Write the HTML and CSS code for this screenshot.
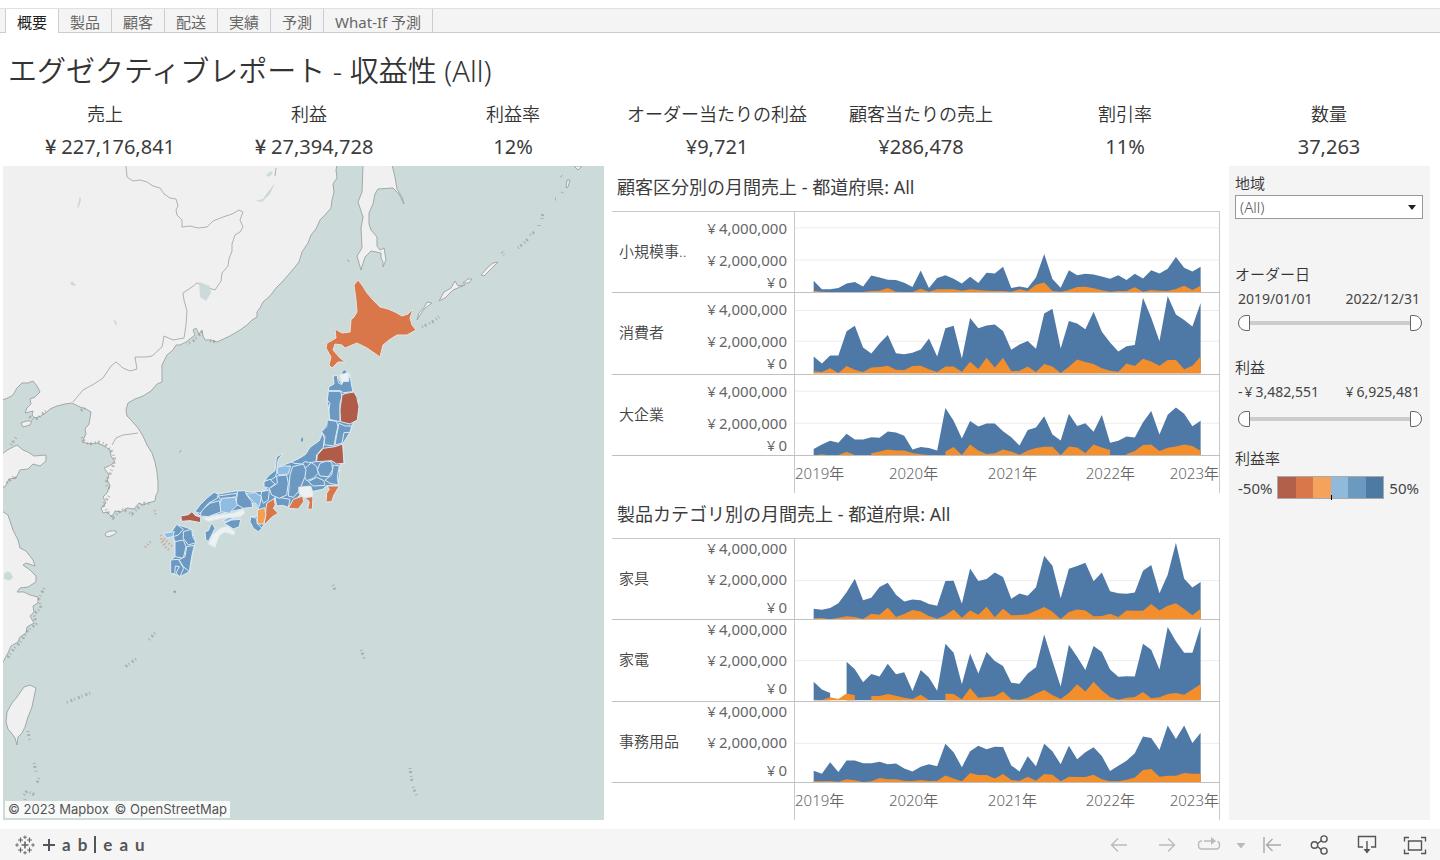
FILE: index.html
```html
<!DOCTYPE html>
<html lang="ja">
<head>
<meta charset="utf-8">
<meta name="viewport" content="width=device-width, initial-scale=1">
<title>エグゼクティブレポート</title>
<link rel="stylesheet" href="styles.css">
</head>
<body>
<div class="page">
  <nav class="tabs" aria-label="シート">
    <button class="tab tab-active" type="button">概要</button>
    <button class="tab" type="button">製品</button>
    <button class="tab" type="button">顧客</button>
    <button class="tab" type="button">配送</button>
    <button class="tab" type="button">実績</button>
    <button class="tab" type="button">予測</button>
    <button class="tab" type="button">What-If 予測</button>
  </nav>

  <header class="title"><h1>エグゼクティブレポート - 収益性 (All)</h1></header>

  <dl class="kpis">
    <div class="kpi"><dt>売上</dt><dd><b>¥</b>227,176,841</dd></div>
    <div class="kpi"><dt>利益</dt><dd><b>¥</b>27,394,728</dd></div>
    <div class="kpi"><dt>利益率</dt><dd>12%</dd></div>
    <div class="kpi"><dt>オーダー当たりの利益</dt><dd>¥9,721</dd></div>
    <div class="kpi"><dt>顧客当たりの売上</dt><dd>¥286,478</dd></div>
    <div class="kpi"><dt>割引率</dt><dd>11%</dd></div>
    <div class="kpi"><dt>数量</dt><dd>37,263</dd></div>
  </dl>

  <main class="board">
    <section class="map" aria-label="地図">
      <svg class="map-art" viewBox="3 166 601 654" preserveAspectRatio="xMinYMin slice" aria-hidden="true">
        <g class="land">
          <path d="M2 165H337L336 170 337 178 333 184 334 192 332 200 331 208 325 215 320 220 316 229 311 235 308 243 302 252 299 262 295 267 289 274 283 281 276 288 270 296 263 302 260 308 257 312 257 317 252 320 247 325 240 330 230 336 217 342 211 340 205 340 203 336 202 330 199 334 196 328 193 330 195 335 190 339 186 342 180 345 176 345 173 350 167 355 162 365 162 382 157 384 151 391 143 396 135 399 128 403 126 410 127 416 131 420 138 428 143 436 147 445 152 453 155 462 157 472 158 482 158 492 156 495 155 501 148 503 143 505 139 503 134 509 127 508 121 512 115 511 112 517 107 512 103 513 101 508 106 503 103 497 107 493 110 485 107 480 109 475 104 468 109 466 115 462 111 456 110 450 104 446 97 443 90 444 82 442 86 434 85 429 89 424 91 412 86 409 80 407 72 403 65 404 57 406 50 409 47 412 41 416 35 418 32 415 33 411 25 413 27 408 31 404 30 399 35 397 40 392 37 386 33 381 28 383 22 383 17 388 13 395 8 398 2 400Z"/>
          <path d="M2 454L9 449 17 445 23 450 28 452 34 456 46 455 46 461 40 466 33 464 28 469 20 470 16 478 9 479 5 487 2 487Z"/>
          <path d="M2 511L8 515 13 530 18 540 20 548 26 551 33 560 35 566 26 563 23 565 30 570 36 576 36 582 28 587 20 588 17 592 24 592 30 595 38 597 38 603 33 606 34 612 30 616 34 623 27 627 26 633 20 637 18 642 11 646 8 653 2 664Z"/>
          <path d="M30 685L36 688 34 697 32 707 28 717 25 727 22 733 18 737 17 745 15 738 13 735 8 729 6 722 7 712 12 703 17 697 24 687Z"/>
          <path d="M105 534Q108 530 116 531Q118 533 111 536Q106 538 105 534ZM21 423Q26 420 32 421L30 425 23 427Z"/>
          <path d="M363 165L362 192 358 202 363 217 361 228 362 248 357 256 361 270 365 257 371 251 376 252 381 253 381 258 383 262 383 267 386 260 384 248 380 250 377 246 377 237 371 230 369 224 369 213 373 204 375 194 378 189 393 188 399 194 404 204 402 197 397 189 395 177 392 165Z"/>
          <path d="M417 320L419 313 425 306 427 302 432 303 424 309ZM439 301L444 292 451 288 455 281 458 286 465 285 453 290 445 298ZM463 283L468 279 472 279 469 283ZM481 275L488 267 493 263 498 262 492 268 484 276ZM574 166L578 170 582 166ZM566 188L567 180 570 180 568 187Z"/>
        </g>
        <g class="border">
          <path d="M126 166L127 177 133 181 140 180 147 182 153 186 160 188 164 194 170 198 176 199 178 206 176 210 177 215 182 220 182 227 190 226 198 228 207 227 213 221 223 217 232 214 239 210 243 212 240 220 243 227 240 232 235 235 232 244 232 251 229 259 228 266 222 273 221 281 215 290 203 286 197 283 192 287 183 293 184 300 187 311 186 325 184 338 173 340M173 340L164 336 162 347 152 356 146 357 135 357 137 369 130 371 123 368 116 362 111 366 103 378 94 384 83 390 73 402M138 433L131 434 123 435 116 438 112 445M276 168L275 176"/>
        </g>
        <path class="water" d="M199 282L210 286 211 293 206 301 200 297ZM77 208L80 196 81 200 79 207ZM70 284L72 281 76 285 74 286ZM113 319L117 322 116 326ZM255 201L263 199 267 193 275 183 270 194 262 202ZM266 175L271 171 273 173 269 177ZM4 574Q9 568 13 577 11 582 4 579Z"/>
        <g class="islets">
          <path d="M82 437Q86 446 94 443T109 448T114 463T108 478T110 488"/>
          <path d="M109 496L103 505 107 511 113 518 122 509 132 514 143 503 151 504"/>
          <path d="M44 588L39 599 41 608 34 614 36 624 28 630 22 640 13 650 6 660"/>
          <path d="M46 411L35 420 27 415M202 332L193 341 187 344M210 341L217 342M85 408L80 411M7 483L14 476 16 480M11 445L17 436"/>
          <path d="M518 248L524 243 528 239M530 235L536 231M539 226L539 225M542 219L543 212M555 199L558 199M562 193L563 191M561 176L562 177M502 252L504 255M422 327L434 321 439 317M348 261L349 260M180 451L181 452"/>
          <path d="M28 731L30 742M34 763L36 772M24 795L27 791 35 795M25 799L23 807M39 778L37 783M155 633L148 641M136 659L125 667M90 693L65 703M410 768L412 783M413 787L417 796M361 650L365 660M333 585L335 590"/>
        </g>
        <path class="pref orange" d="M358 280L362 285 367 293 373 300 380 307 388 309 395 312 402 316 408 314 413 309 410 318 412 325 416 330 407 335 397 335 389 340 383 345 380 357 367 348 357 343 345 348 342 345 335 344 333 350 340 358 345 362 338 362 332 368 329 365 331 357 326 348 327 343 331 341 336 338 335 329 342 333 350 332 351 320 354 317 357 312 356 300 354 285Z"/>
        <g class="prefs" transform="translate(140 360) scale(.3333)">
          <g class="blue">
            <path d="M565 92L561 120 567 150 569 178 545 215 551 240 520 258 497 283 455 306 412 322 408 332 375 360 372 380 386 392 340 396 293 392 235 402 222 397 200 415 165 455 185 472 240 462 310 446 340 428 356 444 350 470 332 470 332 490 355 515 376 490 395 470 385 440 406 412 445 442 480 405 515 395 548 388 560 377 595 375 600 315 612 310 608 252 630 217 635 198 655 160 656 115 640 95 630 65 605 72 590 46 580 48 582 72 567 80Z"/>
            <path d="M95 515L110 493 155 508 168 548 163 556 148 635 120 650 104 642 92 640 92 600 105 590 105 545Z"/>
            <path d="M565 92L567 80 582 72 580 48 592 46 595 68 605 74 610 62 625 65 630 40 634 72 639 95 610 98 600 92ZM605 38L612 28 621 34 618 44 607 43Z"/>
            <path d="M565 94H602L606 110 600 130 600 185 585 182 569 178 567 150 570 130 562 120Z"/>
            <path d="M562 180L590 184 594 200 588 225 582 258 552 254 555 230 545 215 560 200Z"/>
            <path d="M597 190L615 198 635 198 630 217 612 218 606 250 585 255 590 225Z"/>
            <path d="M547 220L553 235 550 262 530 285 528 305 510 308 495 305 485 312 462 310 455 306 478 295 497 283 510 262 538 242Z"/>
            <path d="M540 310L560 303 575 306 578 330 565 350 540 348 532 330Z"/>
            <path d="M580 315L598 318 592 350 595 375 570 370 555 360 575 345Z"/>
            <path d="M495 325L515 308 530 320 535 340 520 355 500 362 490 345Z"/>
            <path d="M505 365L530 352 552 362 555 376 520 378Z"/>
            <path d="M458 320L490 312 498 330 495 350 485 375 475 395 460 412 445 408 448 370 450 345Z"/>
            <path d="M405 410L450 418 445 442 428 436 410 438Z"/>
            <path d="M388 385L412 370 410 348 440 345 445 370 440 405 418 415 395 405Z"/>
            <path d="M408 302L410 290 430 280 417 295 412 308 410 340 405 352 388 362 375 360 388 345 405 332Z"/>
            <path d="M372 365L390 358 405 372 388 385 372 380Z"/>
            <path d="M365 395L388 390 385 420 370 430 362 410Z"/>
            <path d="M332 470L350 475 352 490 366 505 355 515 340 505 330 485Z"/>
            <path d="M293 393L315 392 320 405 335 425 338 442 310 445 288 432Z"/>
            <path d="M235 408L290 400 290 410 240 418Z"/>
            <path d="M185 450L210 430 238 422 245 455 205 470 180 468Z"/>
            <path d="M165 455L180 435 200 415 222 397 235 402 232 415 205 430 180 460Z"/>
            <path d="M195 515L205 512 215 488 225 505 215 525 205 545 197 538Z"/>
            <path d="M252 490L275 480 302 478 298 500 280 507 265 497Z"/>
            <path d="M95 515L110 493 130 508 115 525 100 530Z"/>
            <path d="M130 515L155 508 158 530 168 548 145 555 130 535Z"/>
            <path d="M105 545L130 540 138 560 130 595 105 590Z"/>
            <path d="M140 560L163 556 155 590 148 635 130 620 117 600 135 590Z"/>
            <path d="M92 600L115 598 131 625 120 650 108 640 118 620 106 618 104 642 92 640Z"/>
          </g>
          <path class="blue bare" d="M483 236L489 232 489 243 484 246ZM101 692h6v6h-6Z"/>
          <g class="red">
            <path d="M606 105L618 100 642 96 650 110 657 140 652 180 630 192 602 185 600 150Z"/>
            <path d="M532 285L550 265 585 260 608 252 612 310 590 312 575 302 548 304 530 305Z"/>
            <path d="M122 468L145 464 156 455 165 466 182 472 182 488 150 482 125 484Z"/>
          </g>
          <g class="sky">
            <path d="M412 322L430 318 452 318 445 342 420 345 412 340Z"/>
            <path d="M245 415L285 412 292 435 268 460 242 455 240 430Z"/>
            <path d="M318 400L345 398 365 410 358 440 340 425 328 412Z"/>
            <path d="M70 520L103 515 98 530 80 534Z"/>
            <path d="M245 483L270 470 282 473 262 484Z"/>
          </g>
          <g class="pale">
            <path d="M600 45L625 38 626 62 605 66Z"/>
            <path d="M476 382L512 378 518 395 518 410 492 412 478 402Z"/>
            <path d="M205 552L218 525 240 506 262 498 284 515 282 525 255 516 238 526 225 562Z"/>
            <path d="M190 475L240 465 280 460 310 448 314 460 300 470 250 474 205 484Z"/>
          </g>
          <g class="orange">
            <path d="M562 378L598 378 582 405 575 425 558 426 560 400 568 388Z"/>
            <path d="M445 445L460 418 488 408 491 425 475 447Z"/>
            <path d="M495 413L519 410 517 448 503 447 508 425Z"/>
            <path d="M380 430L402 416 406 435 400 445 414 460 395 472 372 496 376 465Z"/>
          </g>
          <path class="amber" d="M352 450L374 443 378 465 371 492 352 492Z"/>
          <path class="specks" d="M44 450L48 470M62 525L66 550 80 565 90 572M72 535L88 552 98 560M15 562L25 552 34 544M68 542L78 556"/>
        </g>
      </svg>
      <p class="credit"><a href="#mapbox">© 2023 Mapbox</a> <a href="#osm">© OpenStreetMap</a></p>
    </section>

    <div class="charts">
      <section class="chart">
        <h2>顧客区分別の月間売上 - 都道府県: All</h2>
        <div class="rows rows-segment">
          <div class="row"><span class="name">小規模事..</span><div class="scale"><span>¥4,000,000</span><span>¥2,000,000</span><span>¥0</span></div><svg class="plot" data-series="small"></svg></div>
          <div class="row"><span class="name">消費者</span><div class="scale"><span>¥4,000,000</span><span>¥2,000,000</span><span>¥0</span></div><svg class="plot" data-series="consumer"></svg></div>
          <div class="row"><span class="name">大企業</span><div class="scale"><span>¥4,000,000</span><span>¥2,000,000</span><span>¥0</span></div><svg class="plot" data-series="corporate"></svg></div>
        </div>
        <div class="years"><span>2019年</span><span>2020年</span><span>2021年</span><span>2022年</span><span>2023年</span></div>
      </section>
      <section class="chart">
        <h2>製品カテゴリ別の月間売上 - 都道府県: All</h2>
        <div class="rows rows-category">
          <div class="row"><span class="name">家具</span><div class="scale"><span>¥4,000,000</span><span>¥2,000,000</span><span>¥0</span></div><svg class="plot" data-series="furniture"></svg></div>
          <div class="row"><span class="name">家電</span><div class="scale"><span>¥4,000,000</span><span>¥2,000,000</span><span>¥0</span></div><svg class="plot" data-series="technology"></svg></div>
          <div class="row"><span class="name">事務用品</span><div class="scale"><span>¥4,000,000</span><span>¥2,000,000</span><span>¥0</span></div><svg class="plot" data-series="office"></svg></div>
        </div>
        <div class="years"><span>2019年</span><span>2020年</span><span>2021年</span><span>2022年</span><span>2023年</span></div>
      </section>
    </div>

    <aside class="filters">
      <div class="filter filter-region">
        <label for="region">地域</label>
        <div class="select"><select id="region"><option>(All)</option></select></div>
      </div>
      <fieldset class="filter filter-date">
        <legend>オーダー日</legend>
        <div class="ends"><label for="date-from">2019/01/01</label><label for="date-to">2022/12/31</label></div>
        <div class="range">
          <input class="from" id="date-from" type="range" min="0" max="100" value="0">
          <input class="to" id="date-to" type="range" min="0" max="100" value="100">
        </div>
      </fieldset>
      <fieldset class="filter filter-profit">
        <legend>利益</legend>
        <div class="ends"><label for="profit-from">-<span class="yen">¥</span>3,482,551</label><label for="profit-to"><span class="yen">¥</span>6,925,481</label></div>
        <div class="range">
          <input class="from" id="profit-from" type="range" min="0" max="100" value="0">
          <input class="to" id="profit-to" type="range" min="0" max="100" value="100">
        </div>
      </fieldset>
      <div class="filter filter-ratio">
        <h3>利益率</h3>
        <div class="ramp">
          <span>-50%</span>
          <div class="ramp-bar"><i class="c1"></i><i class="c2"></i><i class="c3"></i><i class="c4"></i><i class="c5"></i><i class="c6"></i></div>
          <span>50%</span>
        </div>
      </div>
    </aside>
  </main>

  <footer class="toolbar">
    <a class="brand" href="#tableau" aria-label="tableau">
      <svg class="brand-mark" viewBox="0 0 20 20" aria-hidden="true">
        <path d="M10 6.500v7M6.500 10h7" stroke-width="1.600"/>
        <path d="M5.500 2.500v5M3 5h5M14.500 2.500v5M12 5h5M5.500 12.500v5M3 15h5M14.500 12.500v5M12 15h5" stroke-width="1.200"/>
        <path d="M10 .5v3.500M8.200 2.200h3.600M10 16v3.500M8.200 17.800h3.600M2 8.200v3.600M.3 10h3.500M18 8.200v3.600M16.200 10h3.500" stroke-width="1"/>
      </svg>
      <span class="word">
        <svg class="word-plus" viewBox="0 0 12 12" aria-hidden="true"><path d="M6 0v12M0 6h12"/></svg>
        <span>a</span><span>b</span><i class="word-bar"></i><span>e</span><span>a</span><span>u</span>
      </span>
    </a>
    <div class="actions">
      <button class="act dim w-back" type="button" aria-label="元に戻す"><svg viewBox="0 0 24 24"><path d="M20 12H4.500M11 5.500L4.500 12l6.500 6.500"/></svg></button>
      <button class="act dim w-fwd" type="button" aria-label="やり直し"><svg viewBox="0 0 24 24"><path d="M4 12h15.500M13 5.500l6.500 6.500-6.500 6.500"/></svg></button>
      <button class="act dim w-replay" type="button" aria-label="リプレイ"><svg viewBox="0 0 24 24"><path d="M5 8Q1.500 8 1.500 11V12.500Q1.500 16 5 16H19Q22.500 16 22.500 12.500V11Q22.500 9 20.500 8.500M7 8H15" /><path class="fill" d="M14 4l5 4-5 4z"/></svg></button>
      <button class="act dim w-more" type="button" aria-label="その他"><svg viewBox="0 0 24 24"><path class="fill" d="M7.500 10h9L12 15.500z"/></svg></button>
      <button class="act dim2 w-revert" type="button" aria-label="最初に戻す"><svg viewBox="0 0 24 24"><path d="M4 4v16M21 12H6.500M12.500 6l-6 6 6 6"/></svg></button>
      <button class="act" type="button" aria-label="共有"><svg viewBox="0 0 24 24"><path d="M10.500 10.800L14.500 7.500M10.500 13.500l4 3.500" /><circle cx="7.500" cy="12" r="3.200"/><circle cx="17" cy="6" r="3.100"/><circle cx="17" cy="18" r="3.100"/></svg></button>
      <button class="act" type="button" aria-label="ダウンロード"><svg viewBox="0 0 24 24"><path d="M8 14H3.500V3.500h17V14H16M12 8v9"/><path class="fill" d="M8.500 16h7L12 20.500z"/></svg></button>
      <button class="act" type="button" aria-label="全画面表示"><svg viewBox="0 0 24 24"><path d="M5.500 8h13v9h-13zM6 4.500H1.500V8.500M18 4.500h4.500V8.500M6 20.500H1.500V16.500M18 20.500h4.500V16.500"/></svg></button>
    </div>
  </footer>
</div>
<script src="charts.js"></script>
</body>
</html>
```
FILE: styles.css
```css
* { box-sizing: border-box; }
body {
  margin: 0;
  color: #333;
  background: #fff;
  font-family: "Noto Sans", "Noto Sans CJK JP", sans-serif;
  font-size: 15px;
}
h1, h2, h3, p, dl, dd, fieldset { margin: 0; padding: 0; border: 0; font-weight: 400; }
button { font: inherit; color: inherit; background: none; border: 0; padding: 0; }
a { color: inherit; text-decoration: none; }

.page { min-height: 100vh; display: flex; flex-direction: column; padding-top: 8px; }

/* sheet tabs */
.tabs {
  display: flex;
  height: 25px;
  padding-left: 5px;
  background: #f4f4f4;
  border-top: 1px solid #e0e0e0;
  border-bottom: 1px solid #ccc;
}
.tab {
  height: 23px;
  padding: 0 11px;
  line-height: 27px;
  color: #666;
  border-right: 1px solid #ccc;
}
.tab-active { height: 24px; background: #fff; color: #222; border-left: 1px solid #ccc; }

.title { padding: 16px 8px 0; }
.title h1 { font-size: 29px; line-height: 44px; font-weight: 350; white-space: nowrap; }

.kpis {
  display: grid;
  grid-template-columns: repeat(7, minmax(0, 1fr));
  padding: 7px 9px 0 3px;
  text-align: center;
  white-space: nowrap;
}
.kpi dt { font-size: 18px; line-height: 28px; font-weight: 350; }
.kpi dd { font-size: 20px; line-height: 38px; color: #3c3c3c; }
.kpi b {
  padding: 0 5px 0 10px;
  font-weight: 500;
  line-height: 1;
  font-family: "Noto Sans CJK JP", sans-serif;
}

.board {
  flex: 1;
  display: grid;
  grid-template-columns: 601fr 609fr 201fr;
  gap: 8px;
  margin: 0 10px 9px 3px;
}

/* map */
.map { position: relative; min-width: 0; overflow: hidden; background: #ccdbda; }
.map-art { position: absolute; inset: 0; width: 100%; height: 100%; }
.land path { fill: #f0f0f0; stroke: #a3a7a7; stroke-width: 1; }
.border path { fill: none; stroke: #b0b0b0; stroke-width: 1; }
.water { fill: #ccdbda; }
.islets path { fill: none; stroke: #8d9494; stroke-width: 3; stroke-dasharray: 1 2 2 3; opacity: .6; }
.pref { stroke: #e8e3dc; stroke-width: 1; }
.prefs { stroke: #dcebf5; stroke-width: 3; stroke-linejoin: round; }
.prefs .bare { stroke: none; }
.blue { fill: #6c99c1; }
.sky { fill: #8fbce0; }
.red { fill: #b05c48; }
.orange { fill: #d9774a; }
.amber { fill: #f5a04f; }
.pale { fill: #eef1f2; }
.specks { fill: none; stroke: #d39c8b; stroke-width: 7; stroke-dasharray: 4 6; opacity: .8; }
.credit {
  position: absolute;
  left: 2px;
  bottom: 2px;
  padding: 0 3px;
  background: rgba(255, 255, 255, .85);
  color: #555;
  font-family: Inter, sans-serif;
  font-size: 13px;
  line-height: 17px;
  white-space: nowrap;
}
.credit a + a { margin-left: 2px; }

/* charts */
.charts { display: flex; flex-direction: column; min-width: 0; padding-right: 1px; }
.chart { flex: 1; display: flex; flex-direction: column; }
.chart h2 { height: 45px; padding-left: 5px; font-size: 18px; line-height: 42px; color: #3c3c3c; white-space: nowrap; }
.rows { flex: 1; display: grid; grid-auto-rows: 1fr; border-top: 1px solid #c8c8c8; }
.row {
  display: grid;
  grid-template-columns: 75px 107px minmax(0, 1fr);
  border-bottom: 1px solid #c0c0c0;
  color: #666;
}
.name { align-self: center; padding: 0 0 3px 7px; font-weight: 350; color: #444; }
.scale { display: flex; flex-direction: column; padding-right: 7px; text-align: right; line-height: 18px; }
.scale span::first-letter { margin-right: 3px; }
.rows-segment .scale { padding-top: 7px; }
.rows-segment .scale span:nth-child(2) { margin-top: 14px; }
.rows-segment .scale span:nth-child(3) { margin-top: 4px; }
.rows-category .scale span:nth-child(2) { margin-top: 13px; }
.rows-category .scale span:nth-child(3) { margin-top: 10px; }
.plot { width: 100%; height: 0; min-height: 100%; border-left: 1px solid #c8c8c8; border-right: 1px solid #c8c8c8; }
.plot .grid { stroke: #ececec; stroke-width: 3; }
.plot .sales { fill: #4e79a7; }
.plot .profit { fill: #f28e2b; }
.years {
  display: grid;
  grid-template-columns: 94fr 99fr 98fr 84fr 49fr;
  height: 37px;
  margin-left: 182px;
  border-left: 1px solid #c8c8c8;
  border-right: 1px solid #c8c8c8;
  line-height: 35px;
  color: #666;
  font-weight: 350;
  white-space: nowrap;
}
.years span:last-child { text-align: right; }

/* filters */
.filters { background: #f4f4f4; padding: 6px 7px 0 6px; min-width: 0; }
.filter label, .filter legend, .filter h3 { font-size: 15px; line-height: 22px; padding: 0; font-weight: 350; }
.filter-region { height: 91px; }
.filter-region > label { display: block; }
.select { position: relative; margin-top: 1px; }
.select::after {
  content: "";
  position: absolute;
  right: 7px;
  top: 10px;
  border: 4px solid transparent;
  border-top: 5px solid #222;
  border-bottom: 0;
  pointer-events: none;
}
.select select {
  display: block;
  width: 100%;
  height: 24px;
  padding: 0 4px;
  appearance: none;
  border: 1px solid #999;
  border-radius: 0;
  background: #fff;
  color: #555;
  font: 300 15px "Noto Sans", "Noto Sans CJK JP", sans-serif;
}
.filter-date { height: 93px; }
.filter-profit { height: 91px; }
.ends { display: flex; justify-content: space-between; padding: 4px 3px 2px; }
.filter .ends label { font-size: 14px; line-height: 20px; font-weight: 400; color: #444; white-space: nowrap; }
.yen { padding: 0 3px 0 2px; }
.range { display: grid; padding: 3px 1px 0 3px; }
.filter-profit .range { padding-top: 6px; }
.range input {
  grid-area: 1 / 1;
  width: 100%;
  height: 18px;
  margin: 0;
  appearance: none;
  background: none;
  pointer-events: none;
}
.range .from { background: linear-gradient(#ccc, #ccc) center / 100% 4px no-repeat; }
.range input::-webkit-slider-thumb {
  appearance: none;
  width: 12px;
  height: 16px;
  border: 1px solid #666;
  background: #fff;
  pointer-events: auto;
}
.range .from::-webkit-slider-thumb { border-radius: 8px 1px 1px 8px; }
.range .to::-webkit-slider-thumb { border-radius: 1px 8px 8px 1px; }
.ramp { display: flex; align-items: center; gap: 5px; padding: 7px 4px 0 3px; color: #444; }
.ramp-bar { position: relative; flex: 1; display: flex; height: 23px; border: 1px solid #aaa; }
.ramp-bar::after { content: ""; position: absolute; left: 50%; bottom: -2px; width: 1px; height: 5px; background: #000; }
.ramp-bar i { flex: 1; }
.c1 { background: #b3604b; }
.c2 { background: #d9774a; }
.c3 { background: #f5a35c; }
.c4 { background: #8fbadc; }
.c5 { background: #6c99c0; }
.c6 { background: #4c7aa3; }

/* bottom toolbar */
.toolbar {
  display: flex;
  justify-content: space-between;
  align-items: center;
  height: 31px;
  padding: 0 1px 0 15px;
  background: #f5f5f5;
  color: #555;
}
.brand { display: flex; align-items: center; gap: 8px; }
.brand-mark { width: 20px; height: 20px; stroke: #666; fill: none; }
.word { display: flex; align-items: center; gap: 7px; font: 700 17px/22px Lato, sans-serif; }
.word-plus { width: 12px; height: 12px; stroke: #555; stroke-width: 2; }
.word-bar { width: 2px; height: 17px; background: #555; }
.actions { display: flex; }
.act { width: 48px; height: 31px; display: grid; place-items: center; }
.act svg { width: 24px; height: 24px; fill: none; stroke: #555; stroke-width: 1.4; }
.act .fill { fill: #555; stroke: none; }
.dim svg { stroke: #bbb; }
.dim .fill { fill: #bbb; }
.dim2 svg { stroke: #aaa; }
.w-back { width: 52px; }
.w-fwd { width: 44px; }
.w-replay { width: 40px; }
.w-more { width: 20px; }
.w-revert { width: 46px; }
```
FILE: charts.js
```js
// Monthly heights, January 2019 to December 2022; 49 units = 1,000,000 yen in the
// segment charts, 58 units in the category charts. null marks a month without a value.
const SERIES = {
  small: {
    grid: [98, 195],
    sales: [35,9,9,13,27,31,18,51,45,38,37,29,16,66,13,43,52,41,27,47,28,59,57,77,13,18,13,45,116,40,14,67,52,56,54,48,41,52,37,56,42,67,57,71,107,74,63,77],
    profit: [5,2,1,1,1,1,1,4,5,13,2,1,1,11,2,9,9,9,5,9,7,5,4,4,2,9,4,23,30,4,2,7,16,17,12,6,2,4,4,15,2,7,5,4,10,20,7,20]
  },
  consumer: {
    grid: [97, 190],
    sales: [51,30,54,54,127,144,78,60,90,116,61,58,62,72,105,51,136,144,45,167,136,145,148,128,71,87,98,74,181,195,75,158,151,133,186,126,93,66,82,86,229,168,97,234,178,161,142,213],
    profit: [6,4,15,1,22,11,4,18,19,23,11,10,22,23,12,4,21,21,5,35,13,47,18,47,6,8,21,4,28,21,1,20,42,34,28,15,8,5,30,22,44,36,23,40,40,12,23,51]
  },
  corporate: {
    grid: [97, 194],
    sales: [19,33,44,38,65,48,48,55,53,72,69,59,18,25,22,15,143,105,51,104,87,96,96,73,55,30,77,84,118,63,45,126,89,97,71,122,38,44,57,54,100,134,63,123,145,126,88,105],
    profit: [0,3,0,1,11,1,null,6,12,18,15,15,7,3,1,null,12,25,1,33,15,4,6,18,12,2,15,22,26,26,1,27,24,7,33,24,16,null,4,13,31,33,13,23,27,33,28,14]
  },
  furniture: {
    grid: [117],
    sales: [32,29,34,49,82,123,58,65,98,111,74,54,60,58,46,41,116,117,47,154,116,122,142,128,62,78,71,97,192,162,64,153,161,171,115,142,85,79,77,81,147,164,79,135,232,123,96,113],
    profit: [3,4,0,5,9,7,1,17,14,36,7,16,28,24,10,2,12,30,5,27,14,38,6,32,12,13,15,26,37,23,1,22,30,27,9,10,17,7,27,26,26,46,27,41,49,31,12,32]
  },
  technology: {
    grid: [120],
    sales: [56,33,22,null,117,94,55,80,72,111,79,85,28,92,69,29,171,144,49,142,81,146,119,104,53,50,81,100,199,119,42,168,132,92,164,146,93,71,73,72,171,153,93,222,179,144,144,224],
    profit: [2,1,9,4,21,15,null,13,13,19,14,8,4,17,1,null,20,19,3,37,8,10,12,27,3,2,8,21,31,16,4,22,49,27,56,30,10,2,8,10,25,6,9,19,22,17,33,49]
  },
  office: {
    grid: [118],
    sales: [35,26,61,31,66,66,58,58,62,55,57,42,33,47,55,49,117,91,46,94,111,100,108,107,51,33,79,49,117,94,55,111,70,91,106,80,34,50,65,88,139,134,98,172,131,172,119,150],
    profit: [4,3,4,2,9,6,1,3,13,9,9,5,4,7,4,5,21,12,3,28,22,22,12,25,7,5,17,5,25,23,3,17,16,16,23,9,3,3,8,15,37,40,17,20,20,28,26,26]
  }
};

const WIDTH = 1272, HEIGHT = 243, START = 56, STEP = 24.7;

function area(values) {
  let d = "", lastX = null;
  values.forEach((v, i) => {
    if (v === null) {
      if (lastX !== null) d += `V${HEIGHT}Z`;
      lastX = null;
      return;
    }
    const x = (START + i * STEP).toFixed(1);
    d += lastX === null ? `M${x} ${HEIGHT}V${HEIGHT - v}` : `L${x} ${HEIGHT - v}`;
    lastX = x;
  });
  return d + `V${HEIGHT}Z`;
}

document.querySelectorAll(".plot").forEach((svg) => {
  const s = SERIES[svg.dataset.series];
  svg.setAttribute("viewBox", `0 0 ${WIDTH} ${HEIGHT}`);
  svg.setAttribute("preserveAspectRatio", "none");
  svg.innerHTML =
    s.grid.map((g) => `<path class="grid" d="M0 ${HEIGHT - g}H${WIDTH}"/>`).join("") +
    `<path class="sales" d="${area(s.sales)}"/><path class="profit" d="${area(s.profit)}"/>`;
});
```
